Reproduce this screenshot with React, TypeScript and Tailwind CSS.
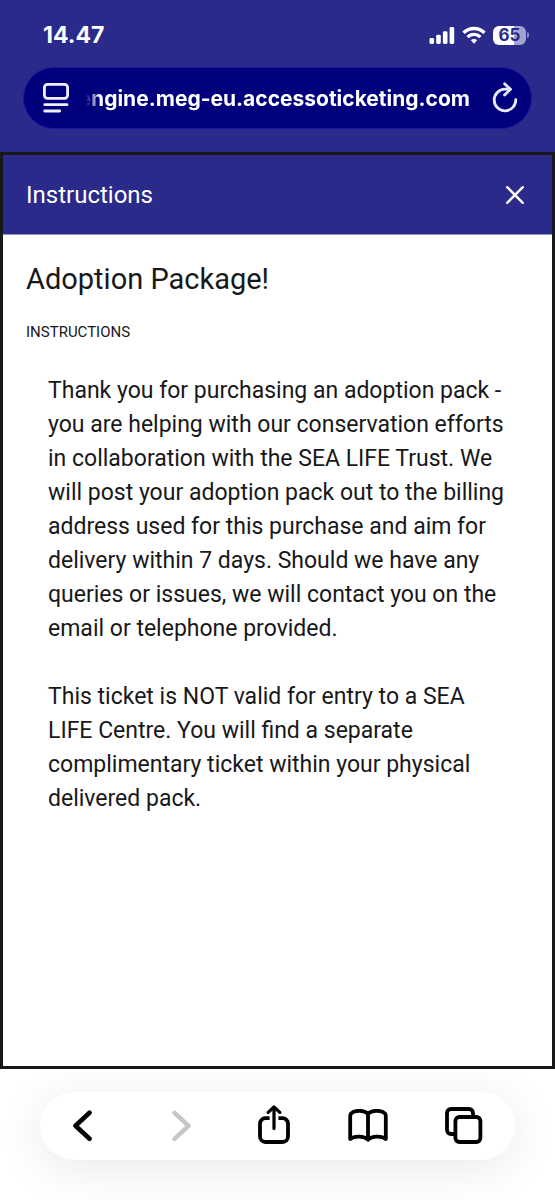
import React from 'react';

interface IconButtonProps {
  label: string;
  disabled?: boolean;
  children: React.ReactNode;
}

const IconButton: React.FC<IconButtonProps> = ({ label, disabled, children }) => {
  return (
    <button type="button" aria-label={label} disabled={disabled} className="flex shrink-0 items-center justify-center">
      {children}
    </button>
  );
};

const StatusBar: React.FC = () => {
  return (
    <div className="flex items-center justify-between pl-[43px] pr-[26px] pt-[20px]">
      <span className="font-['Inter',sans-serif] text-[23px] leading-[30px] font-bold text-white">14.47</span>
      <div className="flex items-center gap-[7px]">
        <svg width="26" height="18" viewBox="0 0 26 18" fill="white">
          <rect x="0.5" y="12" width="4.6" height="6" rx="1.4" />
          <rect x="7.2" y="8.8" width="4.6" height="9.2" rx="1.4" />
          <rect x="13.9" y="5.2" width="4.6" height="12.8" rx="1.4" />
          <rect x="20.6" y="1" width="4.6" height="17" rx="1.4" />
        </svg>
        <svg width="24" height="18" viewBox="0 0 24 18" fill="none" stroke="white" strokeWidth="3.3">
          <path d="M1.5 6.8a15 15 0 0 1 21 0" />
          <path d="M5.6 11.1a9.1 9.1 0 0 1 12.8 0" />
          <path d="M12 17.7l-3.2-3.4a4.6 4.6 0 0 1 6.4 0z" fill="white" stroke="none" />
        </svg>
        <div className="flex items-center gap-px">
          <div className="flex h-[19px] w-[33px] items-center justify-center rounded-[6px] bg-linear-to-r from-white from-65% to-[#a3a3d0] to-65% font-['Inter',sans-serif] text-[17px] leading-[19px] font-bold text-[#292a8a]">
            65
          </div>
          <div className="h-[6px] w-[2px] rounded-r-full bg-[#8888bf]" />
        </div>
      </div>
    </div>
  );
};

const AddressBar: React.FC = () => {
  return (
    <div className="mx-[23px] mt-[17px] flex h-[62px] items-center rounded-full border border-[#1717a5] bg-[#00007d] pl-[18px] pr-[12px]">
      <IconButton label="Page menu">
        <svg width="28" height="32" viewBox="0 0 28 32" fill="none" stroke="#eef0ff" strokeWidth="2.8" strokeLinecap="round">
          <rect x="2.4" y="2.4" width="23.2" height="14" rx="3.2" />
          <path d="M2.7 22.6h22.4M2.7 29h15" />
        </svg>
      </IconButton>
      <div className="ml-[16px] flex min-w-0 flex-1 justify-end overflow-hidden pt-[2px] mask-l-from-[calc(100%-14px)] mask-l-to-100%">
        <span className="whitespace-nowrap font-['Inter',sans-serif] text-[21px] leading-[30px] font-bold text-white">
          engine.meg-eu.accessoticketing.com
        </span>
      </div>
      <div className="ml-[21px] flex">
        <IconButton label="Reload">
          <svg width="28" height="32" viewBox="0 0 28 32" fill="none" stroke="#e8ebff" strokeWidth="2.8" strokeLinecap="round" strokeLinejoin="round">
            <path d="M24.8 17.6a10.8 10.8 0 1 1-10.8-10.4h5.2" />
            <path d="M13.6 1.8l5.8 5.4-5.8 5.8" />
          </svg>
        </IconButton>
      </div>
    </div>
  );
};

const InstructionsPanel: React.FC = () => {
  return (
    <main className="flex flex-1 flex-col border-3 border-[#18181b] bg-white font-['Roboto',sans-serif] text-[#18181b]">
      <div className="flex h-[80px] items-center justify-between border-b border-[#9696c6] bg-[#292a8a] pl-[23px] pr-[27px] text-white">
        <h1 className="text-[24px] leading-[32px]">Instructions</h1>
        <IconButton label="Close">
          <svg width="20" height="20" viewBox="0 0 20 20" fill="none" stroke="white" strokeWidth="2.4" strokeLinecap="round">
            <path d="M2.2 2.2l15.6 15.6M17.8 2.2L2.2 17.8" />
          </svg>
        </IconButton>
      </div>
      <div className="px-[23px] pt-[24px]">
        <h2 className="text-[29px] leading-[40px]">Adoption Package!</h2>
        <h3 className="mt-[21px] text-[15px] leading-[24px]">INSTRUCTIONS</h3>
        <div className="space-y-[34px] px-[22px] pt-[30px] text-[23px] leading-[34px]">
          <p>
            Thank you for purchasing an adoption pack - you are helping with our conservation efforts in
            collaboration with the SEA LIFE Trust. We will post your adoption pack out to the billing address
            used for this purchase and aim for delivery within 7 days. Should we have any queries or issues, we
            will contact you on the email or telephone provided.
          </p>
          <p>
            This ticket is NOT valid for entry to a SEA LIFE Centre. You will find a separate complimentary
            ticket within your physical delivered pack.
          </p>
        </div>
      </div>
    </main>
  );
};

const Toolbar: React.FC = () => {
  return (
    <footer className="overflow-hidden bg-white px-[40px] pt-[23px] pb-[40px]">
      <nav className="grid h-[68px] grid-cols-5 items-center rounded-full bg-white pr-[6px] shadow-[0_8px_48px_rgba(0,0,0,0.09)]">
        <IconButton label="Back">
          <svg width="30" height="32" viewBox="0 0 30 32" fill="none" stroke="black" strokeWidth="4.6" strokeLinecap="round" strokeLinejoin="round">
            <path d="M17.5 2.8L3.5 15.8l14 13" />
          </svg>
        </IconButton>
        <IconButton label="Forward" disabled>
          <svg width="22" height="32" viewBox="0 0 22 32" fill="none" stroke="#c6c6c9" strokeWidth="4.4" strokeLinecap="round" strokeLinejoin="round">
            <path d="M4.5 2.8l14 13-14 13" />
          </svg>
        </IconButton>
        <IconButton label="Share">
          <svg width="34" height="42" viewBox="0 0 34 42" fill="none" stroke="black" strokeWidth="3.8" strokeLinejoin="round">
            <path d="M12.6 13.2H8.4a5.4 5.4 0 0 0-5.4 5.4v13a5.400 5.400 0 0 0 5.400 5.400h17.200a5.400 5.400 0 0 0 5.400-5.400v-13a5.400 5.400 0 0 0-5.400-5.400h-4.200" />
            <path d="M17 23.500V2M11.200 7.400L17 2l5.800 5.400" strokeWidth="3.200" strokeLinecap="round" />
          </svg>
        </IconButton>
        <IconButton label="Bookmarks">
          <svg width="42" height="34" viewBox="0 0 42 34" fill="none" stroke="black" strokeWidth="3.800" strokeLinecap="round" strokeLinejoin="round">
            <path d="M21 5C17.500 0.800 7.500 0.800 4 4.600Q3.200 5.500 3.200 7V30c4-3.400 13.800-3.400 17.800 0.800C25 26.600 34.800 26.600 38.800 30V7Q38.800 5.500 38 4.600C34.500 0.800 24.500 0.800 21 5v25.500" />
          </svg>
        </IconButton>
        <IconButton label="Tabs">
          <svg width="44" height="40" viewBox="-4 0 44 40" fill="none" stroke="black" strokeWidth="3.800" strokeLinejoin="round">
            <path d="M29 10.500V7a4 4 0 0 0-4-4H7a4 4 0 0 0-4 4v17a4 4 0 0 0 4 4h4" />
            <rect x="11.400" y="11" width="25" height="25" rx="4" />
          </svg>
        </IconButton>
      </nav>
    </footer>
  );
};

export default function App() {
  return (
    <div className="flex min-h-screen flex-col bg-[#292a8a]">
      <header className="pb-[23px]">
        <StatusBar />
        <AddressBar />
      </header>
      <InstructionsPanel />
      <Toolbar />
    </div>
  );
}
